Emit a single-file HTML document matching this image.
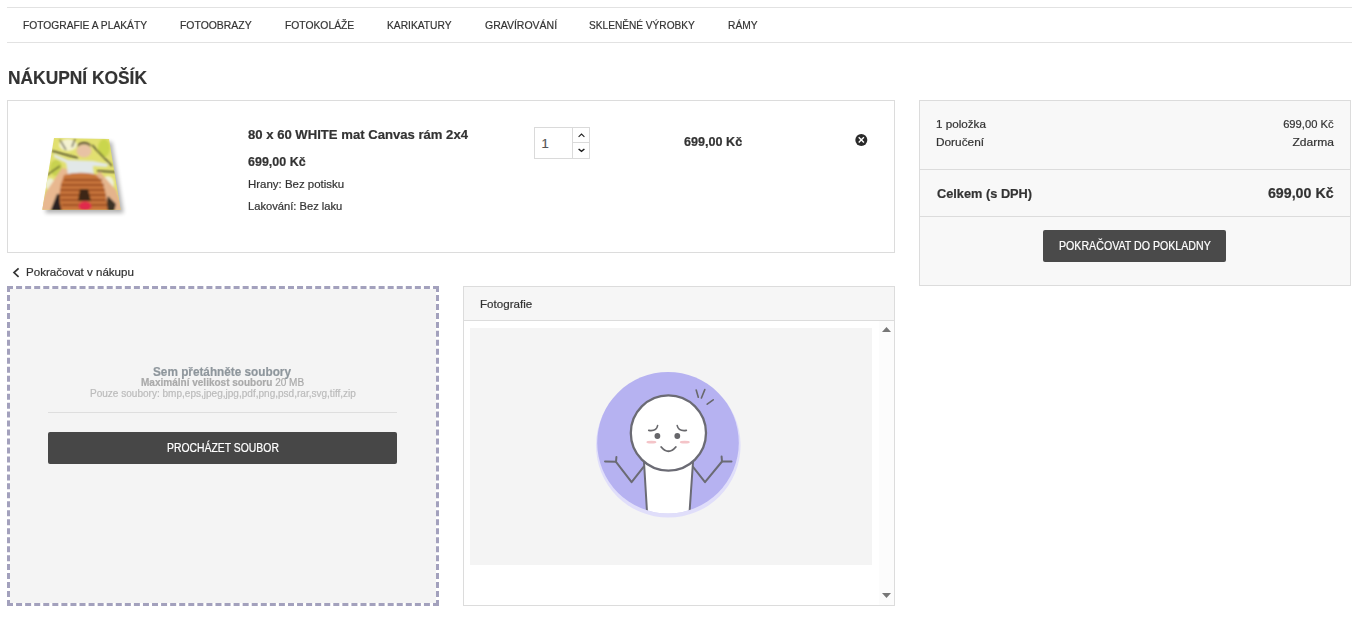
<!DOCTYPE html>
<html><head><meta charset="utf-8"><style>
html,body{margin:0;padding:0;background:#fff;width:1365px;height:621px;overflow:hidden;position:relative}
.t{position:absolute;font-family:"Liberation Sans", sans-serif;line-height:1;white-space:nowrap;-webkit-text-stroke:0.2px currentColor}
.t b{font-weight:700}
.a{position:absolute;box-sizing:border-box}
</style></head><body>
<!-- nav lines -->
<div class="a" style="left:7px;top:7px;width:1345px;height:1px;background:#e2e2e2"></div>
<div class="a" style="left:7px;top:42px;width:1345px;height:1px;background:#e2e2e2"></div>
<!-- cart box -->
<div class="a" style="left:7px;top:100px;width:888px;height:153px;border:1px solid #dcdcdc;background:#fff"></div>
<!-- summary box -->
<div class="a" style="left:919px;top:100px;width:432px;height:186px;border:1px solid #dcdcdc;background:#f8f8f8"></div>
<div class="a" style="left:920px;top:169px;width:430px;height:1px;background:#dcdcdc"></div>
<div class="a" style="left:920px;top:216px;width:430px;height:1px;background:#dcdcdc"></div>
<div class="a" style="left:1043px;top:230px;width:183px;height:32px;background:#4a4a4a;border-radius:2px"></div>
<!-- qty input -->
<div class="a" style="left:534px;top:127px;width:56px;height:32px;border:1px solid #dadada;background:#fff"></div>
<div class="a" style="left:572px;top:128px;width:1px;height:30px;background:#dadada"></div>
<div class="a" style="left:573px;top:142px;width:16px;height:1px;background:#dadada"></div>
<svg class="a" style="left:570px;top:126px" width="24" height="34" viewBox="0 0 24 34">
 <path d="M8.6 10.9 L11.5 8.1 L14.4 10.9" fill="none" stroke="#222" stroke-width="1.1"/>
 <path d="M8.6 23 L11.5 25.3 L14.4 23" fill="none" stroke="#1a1a1a" stroke-width="1.5"/>
</svg>
<!-- remove icon -->
<svg class="a" style="left:854px;top:133px" width="14" height="14" viewBox="0 0 14 14">
 <circle cx="7.3" cy="6.9" r="6" fill="#2a2a2a"/>
 <path d="M4.7 4.3 L9.9 9.5 M9.9 4.3 L4.7 9.5" stroke="#fff" stroke-width="1.4"/>
</svg>
<!-- continue chevron -->
<svg class="a" style="left:11px;top:266px" width="10" height="13" viewBox="0 0 10 13">
 <path d="M7.6 2.4 L3 6.6 L7.6 10.8" fill="none" stroke="#333" stroke-width="1.7"/>
</svg>
<!-- upload box -->
<div class="a" style="left:7px;top:286px;width:432px;height:320px;border:3px dashed #a3a1bd;background:#f4f4f4;background-clip:padding-box"></div>
<div class="a" style="left:48px;top:412px;width:349px;height:1px;background:#dedede"></div>
<div class="a" style="left:48px;top:432px;width:349px;height:32px;background:#474747;border-radius:2px"></div>
<!-- foto panel -->
<div class="a" style="left:463px;top:286px;width:432px;height:320px;border:1px solid #dcdcdc;background:#fff"></div>
<div class="a" style="left:464px;top:287px;width:430px;height:34px;background:#f6f6f6;border-bottom:1px solid #dcdcdc"></div>
<div class="a" style="left:879px;top:321px;width:15px;height:284px;background:#fcfcfc"></div>
<div class="a" style="left:470px;top:328px;width:402px;height:237px;background:#f4f4f4"></div>
<svg class="a" style="left:880px;top:324px" width="14" height="10"><path d="M2 8 L6.5 3 L11 8 Z" fill="#777"/></svg>
<svg class="a" style="left:880px;top:591px" width="14" height="10"><path d="M2 2 L6.5 7 L11 2 Z" fill="#777"/></svg>
<!-- avatar -->
<svg class="a" style="left:590px;top:365px" width="160" height="160" viewBox="590 365 160 160">
 <defs><clipPath id="cc"><circle cx="668" cy="442.7" r="70.8"/></clipPath></defs>
 <circle cx="668.3" cy="445.3" r="72.3" fill="#e0defa"/>
 <circle cx="668" cy="442.7" r="70.8" fill="#b6b2f1"/>
 <g clip-path="url(#cc)" stroke="#6b6b74" stroke-width="2" fill="none" stroke-linecap="round" stroke-linejoin="round">
  <path d="M644 462 L647.5 520 L689 520 L693 462 Z" fill="#fff"/>
  <path d="M643.6 466.8 L631.6 482.2 L616 461.8"/>
  <path d="M616 461.8 L605 461.4 M616 461.8 L616.4 457"/>
  <path d="M693 466.8 L705 482.2 L722 461.5"/>
  <path d="M722 461.5 L731.5 461.4 M722 461.5 L721.6 456.6"/>
 </g>
 <circle cx="668.4" cy="433" r="37.6" fill="#fff" stroke="#6b6b74" stroke-width="2.3"/>
 <ellipse cx="651.4" cy="442.2" rx="5" ry="1.4" fill="#f4c4c8"/>
 <ellipse cx="684.8" cy="442.2" rx="5" ry="1.4" fill="#f4c4c8"/>
 <circle cx="657.4" cy="436" r="2.9" fill="#66666a"/>
 <circle cx="677.3" cy="436" r="2.9" fill="#66666a"/>
 <g stroke="#68686c" stroke-width="1.6" fill="none" stroke-linecap="round">
  <path d="M648.7 430.4 Q656.5 431.5 657.6 425.6"/>
  <path d="M677.2 425.6 Q678.5 431.5 686.4 430.4"/>
  <path d="M661.2 447 Q668.5 455.5 675.8 447" stroke-width="1.9"/>
  <path d="M696.2 390 L698.3 397.2 M704.8 389.6 L701.4 398 M713.2 399.8 L707.2 404.2"/>
 </g>
</svg>
<!-- photo -->
<svg class="a" style="left:30px;top:130px" width="100" height="90" viewBox="30 130 100 90">
 <defs>
  <clipPath id="pc"><path d="M54 138 L109 139 L120.6 209.7 L42.3 209.7 Z"/></clipPath>
  <filter id="bl" x="-20%" y="-20%" width="140%" height="140%"><feGaussianBlur stdDeviation="0.9"/></filter>
  <filter id="sh" x="-30%" y="-30%" width="160%" height="160%"><feGaussianBlur stdDeviation="2"/></filter>
 </defs>
 <path d="M57 141 L112 142 L123.6 213 L45.3 213 Z" fill="#000" opacity="0.3" filter="url(#sh)"/>
 <g clip-path="url(#pc)">
  <rect x="30" y="130" width="100" height="90" fill="#e2e070"/>
  <g filter="url(#bl)">
   <ellipse cx="68" cy="145" rx="9" ry="6" fill="#f4f2d0"/>
   <ellipse cx="104" cy="148" rx="6" ry="9" fill="#cad64e"/>
   <ellipse cx="56" cy="168" rx="6" ry="8" fill="#c8d250"/>
   <ellipse cx="108" cy="184" rx="6" ry="8" fill="#f0f0d8"/>
   <ellipse cx="50" cy="184" rx="5" ry="6" fill="#eef0d4"/>
   <path d="M52 151 L78 158 M92 145 L112 166 M47 175 L60 166 M97 171 L116 172 M60 140 L66 150 M75 139 L72 147" stroke="#3e3a28" stroke-width="1.3"/>
   <path d="M38 212 L46 192 L62 168 L70 170 L60 212 Z" fill="#e8b890"/>
   <path d="M124 212 L116 190 L100 172 L94 176 L104 212 Z" fill="#e4b48c"/>
   <path d="M50 212 L57 194 L64 194 L66 212 Z" fill="#2a2420"/>
   <path d="M104 212 L108 196 L116 204 L114 212 Z" fill="#3a3028"/>
   <path d="M54 154 L68 160 L93 161 L108 164 L107 167 L93 166 L94 174 L68 174 L66 163 L54 157 Z" fill="#e2e8e8"/>
   <ellipse cx="84" cy="151" rx="7.5" ry="6.5" fill="#e8c2a4"/>
   <path d="M77 147 Q84 141 91 147 L90 144 Q84 140 78 144 Z" fill="#4a3a30"/>
   <path d="M64 175 Q78 171 94 174 Q103 178 106 196 L108 212 L62 212 Q56 194 64 175 Z" fill="#c8743a"/>
   <path d="M64 180 L102 180 M61 185 L104 185 M60 190 L105 190 M60 195 L106 195 M61 200 L106 200 M62 205 L107 205" stroke="#8e4418" stroke-width="1.4"/>
   <path d="M80 189 L88 189 L91 201 L78 201 Z" fill="#3e2818"/>
   <ellipse cx="85" cy="206" rx="6.5" ry="4.5" fill="#e02c4c"/>
  </g>
 </g>
</svg>

<div class="t" style="left:23.0px;top:20px;font-size:11.5px;font-weight:400;color:#333;transform:scaleX(0.8914);transform-origin:0 0">FOTOGRAFIE A PLAKÁTY</div>
<div class="t" style="left:180.4px;top:20px;font-size:11.5px;font-weight:400;color:#333;transform:scaleX(0.9060);transform-origin:0 0">FOTOOBRAZY</div>
<div class="t" style="left:284.8px;top:20px;font-size:11.5px;font-weight:400;color:#333;transform:scaleX(0.8974);transform-origin:0 0">FOTOKOLÁŽE</div>
<div class="t" style="left:387.1px;top:20px;font-size:11.5px;font-weight:400;color:#333;transform:scaleX(0.8904);transform-origin:0 0">KARIKATURY</div>
<div class="t" style="left:484.5px;top:20px;font-size:11.5px;font-weight:400;color:#333;transform:scaleX(0.9123);transform-origin:0 0">GRAVÍROVÁNÍ</div>
<div class="t" style="left:589.0px;top:20px;font-size:11.5px;font-weight:400;color:#333;transform:scaleX(0.8805);transform-origin:0 0">SKLENĚNÉ VÝROBKY</div>
<div class="t" style="left:727.6px;top:20px;font-size:11.5px;font-weight:400;color:#333;transform:scaleX(0.8906);transform-origin:0 0">RÁMY</div>
<div class="t" style="left:7.6px;top:68px;font-size:19px;font-weight:700;color:#333;transform:scaleX(0.9144);transform-origin:0 0">NÁKUPNÍ KOŠÍK</div>
<div class="t" style="left:247.9px;top:128px;font-size:13px;font-weight:700;color:#333;transform:scaleX(1.0081);transform-origin:0 0">80 x 60 WHITE mat Canvas rám 2x4</div>
<div class="t" style="left:248.0px;top:156px;font-size:12.5px;font-weight:700;color:#333;transform:scaleX(0.9985);transform-origin:0 0">699,00 Kč</div>
<div class="t" style="left:248.0px;top:179px;font-size:11px;font-weight:400;color:#333;transform:scaleX(1.0419);transform-origin:0 0">Hrany: Bez potisku</div>
<div class="t" style="left:248.0px;top:201px;font-size:11px;font-weight:400;color:#333;transform:scaleX(1.0145);transform-origin:0 0">Lakování: Bez laku</div>
<div class="t" style="left:541.5px;top:137px;font-size:13px;font-weight:400;color:#555;transform:scaleX(1.0000);transform-origin:0 0">1</div>
<div class="t" style="left:683.8px;top:136px;font-size:12.5px;font-weight:700;color:#333;transform:scaleX(1.0089);transform-origin:0 0">699,00 Kč</div>
<div class="t" style="left:936.3px;top:119px;font-size:11px;font-weight:400;color:#333;transform:scaleX(1.0596);transform-origin:0 0">1 položka</div>
<div class="t" style="left:936.3px;top:137px;font-size:11px;font-weight:400;color:#333;transform:scaleX(1.0753);transform-origin:0 0">Doručení</div>
<div class="t" style="right:31.6px;top:119px;font-size:11px;font-weight:400;color:#333;transform:scaleX(1.0172);transform-origin:100% 0">699,00 Kč</div>
<div class="t" style="right:31.6px;top:137px;font-size:11px;font-weight:400;color:#333;transform:scaleX(1.0948);transform-origin:100% 0">Zdarma</div>
<div class="t" style="left:936.5px;top:187px;font-size:13px;font-weight:700;color:#333;transform:scaleX(0.9823);transform-origin:0 0">Celkem (s DPH)</div>
<div class="t" style="right:31.6px;top:186px;font-size:14px;font-weight:700;color:#333;transform:scaleX(1.0169);transform-origin:100% 0">699,00 Kč</div>
<div class="t" style="left:1058.5px;top:240px;font-size:12px;font-weight:400;color:#fff;transform:scaleX(0.8858);transform-origin:0 0">POKRAČOVAT DO POKLADNY</div>
<div class="t" style="left:26.4px;top:267px;font-size:11px;font-weight:400;color:#333;transform:scaleX(1.0503);transform-origin:0 0">Pokračovat v nákupu</div>
<div class="t" style="left:153.4px;top:366px;font-size:12px;font-weight:700;color:#8e969c;transform:scaleX(0.9808);transform-origin:0 0">Sem přetáhněte soubory</div>
<div class="t" style="left:141.0px;top:378px;font-size:10px;font-weight:400;color:#aaa;transform:scaleX(1.0016);transform-origin:0 0"><b>Maximální velikost souboru</b> 20 MB</div>
<div class="t" style="left:89.6px;top:389px;font-size:10px;font-weight:400;color:#bbb;transform:scaleX(1.0035);transform-origin:0 0">Pouze soubory: bmp,eps,jpeg,jpg,pdf,png,psd,rar,svg,tiff,zip</div>
<div class="t" style="left:166.7px;top:442px;font-size:12px;font-weight:400;color:#fff;transform:scaleX(0.8665);transform-origin:0 0">PROCHÁZET SOUBOR</div>
<div class="t" style="left:479.7px;top:299px;font-size:11.5px;font-weight:400;color:#333;transform:scaleX(1.0100);transform-origin:0 0">Fotografie</div>
</body></html>
